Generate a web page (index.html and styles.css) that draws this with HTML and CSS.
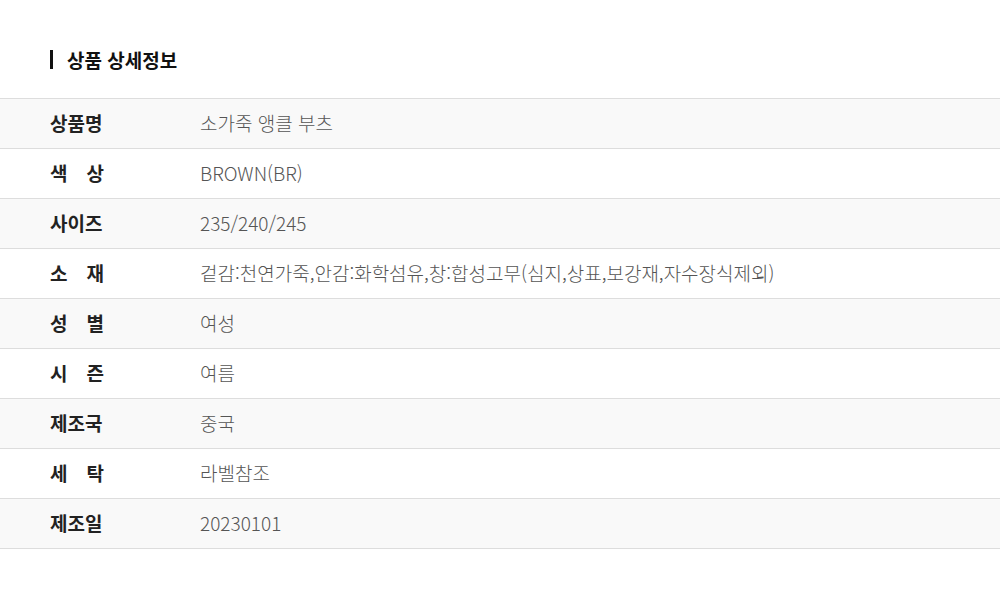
FILE: index.html
```html
<!DOCTYPE html>
<html lang="ko">
<head>
<meta charset="utf-8">
<link rel="stylesheet" href="styles.css">
</head>
<body>
<section class="detail">
  <h2 class="title">상품 상세정보</h2>
  <div class="table">
    <div class="row"><span class="label">상품명</span><span class="value">소가죽 앵클 부츠</span></div>
    <div class="row"><span class="label">색 상</span><span class="value">BROWN(BR)</span></div>
    <div class="row"><span class="label">사이즈</span><span class="value">235/240/245</span></div>
    <div class="row"><span class="label">소 재</span><span class="value">겉감:천연가죽,안감:화학섬유,창:합성고무(심지,상표,보강재,자수장식제외)</span></div>
    <div class="row"><span class="label">성 별</span><span class="value">여성</span></div>
    <div class="row"><span class="label">시 즌</span><span class="value">여름</span></div>
    <div class="row"><span class="label">제조국</span><span class="value">중국</span></div>
    <div class="row"><span class="label">세 탁</span><span class="value">라벨참조</span></div>
    <div class="row"><span class="label">제조일</span><span class="value">20230101</span></div>
  </div>
</section>
</body>
</html>
```
FILE: styles.css
```css
html, body {
  margin: 0;
  padding: 0;
  background: #fff;
}
body {
  font-family: "Noto Sans CJK KR", "Noto Sans", sans-serif;
  color: #222;
}
.detail {
  padding-top: 50px;
}
.title {
  margin: 0 0 0 50px;
  padding-left: 14px;
  border-left: 3px solid #111;
  font-size: 19px;
  font-weight: 700;
  line-height: 18px;
  height: 19px;
  display: flex;
  align-items: center;
  color: #111;
}
.table {
  margin-top: 29px;
  border-top: 1px solid #ddd;
}
.row {
  display: flex;
  align-items: center;
  height: 49px;
  padding-bottom: 3px;
  box-sizing: border-box;
  height: 50px;
  border-bottom: 1px solid #ddd;
}
.row:nth-child(odd) {
  background: #f9f9f9;
}
.label {
  width: 54px;
  margin-left: 50px;
  font-size: 19px;
  font-weight: 700;
  color: #222;
  text-align: justify;
  text-align-last: justify;
}
.value {
  margin-left: 96px;
  font-size: 19px;
  font-weight: 300;
  color: #555;
}
```
